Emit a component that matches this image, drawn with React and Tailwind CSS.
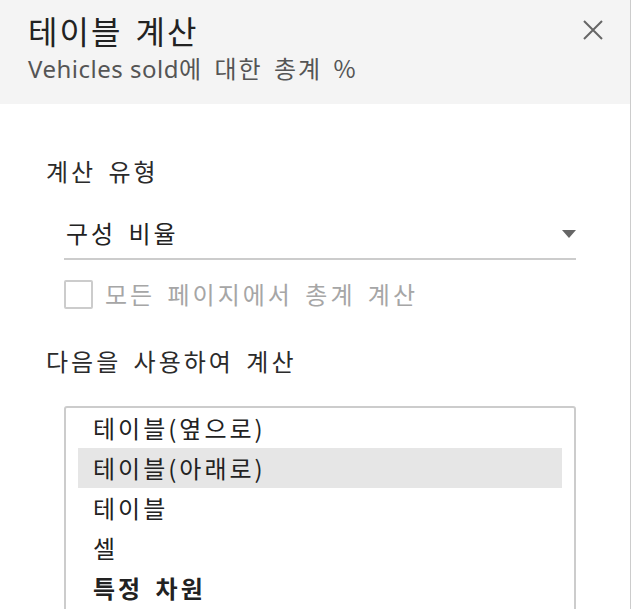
import React, { useState } from 'react';

const OPTIONS = [
  { label: '테이블(옆으로)' },
  { label: '테이블(아래로)' },
  { label: '테이블' },
  { label: '셀' },
  { label: '특정 차원', bold: true },
];

const App = () => {
  const [selected, setSelected] = useState(1);
  const [allPages, setAllPages] = useState(false);

  return (
    <div className="w-[631px] h-[609px] bg-white border-r border-[#cccccc] overflow-hidden font-['Noto_Sans_CJK_KR',sans-serif] text-[#2b2b2b]">
      {/* 헤더 */}
      <header className="h-[104px] bg-[#f4f4f4] flex justify-between pl-[28px] pr-[26px]">
        <div className="pt-[10px]">
          <h1 className="text-[32px] leading-[40px] text-[#222222] tracking-[2px] [word-spacing:4px]">테이블 계산</h1>
          <p className="text-[24px] leading-[32px] mt-[2px] text-[#555555]">
            <span className="font-['Noto_Sans',sans-serif] tracking-[0.5px]">Vehicles sold</span>
            <span className="tracking-[2px] [word-spacing:4px]">에 대한 총계 %</span>
          </p>
        </div>
        <button type="button" aria-label="닫기" className="mt-[19px] w-[22px] h-[22px] flex items-center justify-center">
          <svg width="22" height="22" viewBox="0 0 22 22" fill="none" stroke="#666666" strokeWidth="2">
            <path d="M2 2 L20 20 M20 2 L2 20" />
          </svg>
        </button>
      </header>

      <main className="pl-[46px] pr-[54px] text-[24px] leading-[32px] tracking-[3px] [word-spacing:4px]">
        <h2 className="mt-[51px]">계산 유형</h2>

        {/* 계산 유형 드롭다운 */}
        <div className="ml-[18px] mt-[30px] flex items-center justify-between pl-[2px] pb-[9px] border-b-2 border-[#cccccc]">
          <span className="text-[#222222]">구성 비율</span>
          <svg width="14" height="8" viewBox="0 0 14 8" className="mt-[2px]">
            <path d="M0 0 H14 L7 8 Z" fill="#666666" />
          </svg>
        </div>

        <label className="ml-[18px] mt-[18px] flex items-center gap-[12px] cursor-default">
          <span
            onClick={() => setAllPages(!allPages)}
            className="w-[29px] h-[29px] border-2 border-[#cccccc] rounded-[2px] bg-white"
          />
          <span className="text-[#a6a6a6]">모든 페이지에서 총계 계산</span>
        </label>

        <h2 className="mt-[35px]">다음을 사용하여 계산</h2>

        {/* 다음을 사용하여 계산 목록 */}
        <ul className="ml-[18px] mt-[29px] border-2 border-[#cccccc] rounded-[3px] px-[12px] h-[240px]">
          {OPTIONS.map((opt, i) => (
            <li
              key={opt.label}
              onClick={() => setSelected(i)}
              className={`h-[40px] flex items-center pl-[15px] text-[#222222] ${selected === i ? 'bg-[#e6e6e6]' : ''} ${opt.bold ? 'font-bold' : ''}`}
            >
              {opt.label}
            </li>
          ))}
        </ul>
      </main>
    </div>
  );
};

export default App;
